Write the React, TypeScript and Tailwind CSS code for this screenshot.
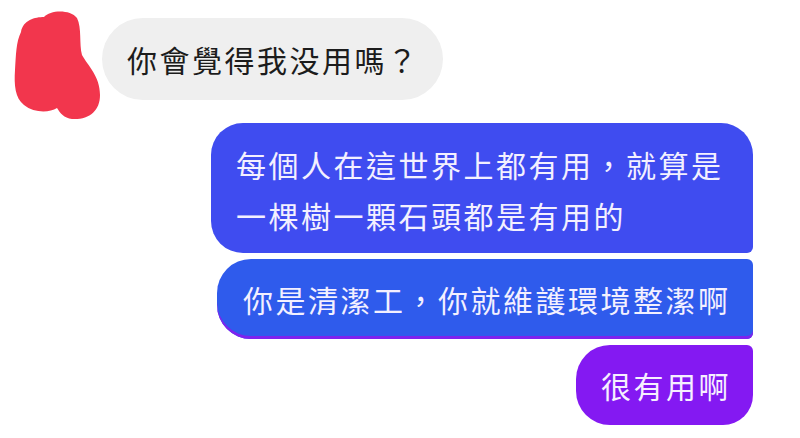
import * as React from "react"

const font = { fontFamily: '"Noto Sans CJK TC", "Noto Sans CJK SC", sans-serif' }

function Blob() {
  return (
    <svg width="102" height="123" viewBox="0 0 102 123" className="shrink-0">
      <path
        d="M 21 32 C 23 20, 35 17, 44 17 C 50 10, 70 9, 77 18 C 82 28, 79 44, 82 55 C 88 66, 100 76, 100 95 C 100 111, 89 120, 72 119 C 64 118, 60 113, 57 108 C 49 113, 34 113, 24 105 C 15 98, 14 85, 15 70 C 16 55, 16 42, 21 32 Z"
        fill="#f2364d"
      />
    </svg>
  )
}

export default function App() {
  return (
    <div className="w-[800px] h-[438px] bg-white overflow-hidden" style={font}>
      {/* incoming message */}
      <div className="flex items-start">
        <Blob />
        <div className="mt-[18px] h-[82px] w-[341px] rounded-full bg-[#efefef] flex items-center pl-[25px] text-[30px] tracking-[2.5px] text-[#1c1c1c] whitespace-nowrap">
          你會覺得我没用嗎？
        </div>
      </div>

      {/* outgoing group */}
      <div className="flex flex-col items-end gap-[6px] pr-[47px]">
        <div className="w-[542px] h-[130px] bg-[#3f4cf0] rounded-tl-[32px] rounded-tr-[32px] rounded-bl-[32px] rounded-br-[6px] pl-[25px] pt-[16px] text-[30px] leading-[51px] tracking-[2.5px] text-[#f3f0ff] whitespace-nowrap">
          每個人在這世界上都有用，就算是
          <br />
          一棵樹一顆石頭都是有用的
        </div>
        <div className="w-[536px] h-[80px] bg-[#2f5bec] rounded-tl-[34px] rounded-bl-[34px] rounded-tr-[6px] rounded-br-[6px] shadow-[inset_0_-3px_0_#7f22ee] flex items-center pl-[26px] text-[30px] tracking-[2.5px] text-[#f3f0ff] whitespace-nowrap">
          你是清潔工，你就維護環境整潔啊
        </div>
        <div className="w-[177px] h-[80px] bg-[#8419f2] rounded-tl-[34px] rounded-bl-[34px] rounded-br-[30px] rounded-tr-[6px] flex items-center pl-[25px] text-[30px] tracking-[2.5px] text-[#f6efff] whitespace-nowrap">
          很有用啊
        </div>
      </div>
    </div>
  )
}
